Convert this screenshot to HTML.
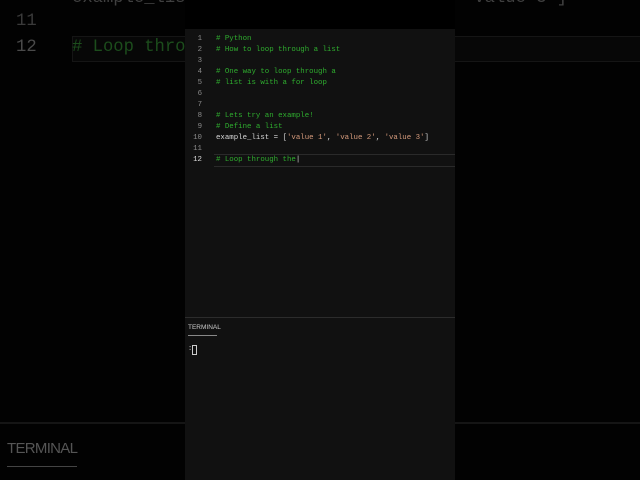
<!DOCTYPE html>
<html><head><style>
body{margin:0;width:640px;height:480px;background:#020202;overflow:hidden;position:relative;font-family:"Liberation Mono",monospace}
.a{position:absolute;white-space:pre}
.big{font-size:17.2px;line-height:26px}
.c{font-size:7.4px;line-height:11px}
.g{color:#2fae2f}
.w{color:#d8d8d8}
.s{color:#d69b7c}
.n{color:#8a8a8a}
</style></head><body>
<div class="a big" style="left:72px;top:-14px;color:#404040">example_list = ['value 1', 'value 2', 'value 3']</div>
<div class="a big" style="left:16px;top:9px;color:#3a3a3a">11</div>
<div class="a big" style="left:16px;top:35px;color:#4a4a4a">12</div>
<div class="a" style="left:72px;top:36px;width:568px;height:24px;border:1px solid #151515;background:#070707"></div>
<div class="a big" style="left:72px;top:35px;color:#1c4d1c">#&nbsp;Loop thro</div>
<div class="a" style="left:0;top:422px;width:640px;height:2px;background:#151515"></div>
<div class="a" style="left:7px;top:440px;font-family:'Liberation Sans',sans-serif;font-size:15px;color:#555;letter-spacing:-0.7px">TERMINAL</div>
<div class="a" style="left:7px;top:466px;width:70px;height:1px;background:#444"></div>
<div class="a" style="left:185px;top:0;width:270px;height:29px;background:#000"></div>
<div class="a" style="left:185px;top:29px;width:270px;height:451px;background:#111"></div>
<div class="a c n" style="left:188px;top:34px;width:14px;text-align:right">1
2
3
4
5
6
7
8
9
10
11
<span style="color:#ddd">12</span></div>
<div class="a" style="left:214px;top:154px;width:241px;height:11px;border-top:1px solid #2a2a2a;border-bottom:1px solid #2a2a2a"></div>
<div class="a c g" style="left:216px;top:34px"># Python
# How to loop through a list

# One way to loop through a
# list is with a for loop


# Lets try an example!
# Define a list
<span class="w">example_list = [</span><span class="s">'value 1'</span><span class="w">, </span><span class="s">'value 2'</span><span class="w">, </span><span class="s">'value 3'</span><span class="w">]</span>

# Loop through the<span class="w">|</span></div>
<div class="a" style="left:185px;top:317px;width:270px;height:1px;background:#2c2c2c"></div>
<div class="a" style="left:188px;top:324px;font-family:'Liberation Sans',sans-serif;font-size:6.5px;color:#ccc">TERMINAL</div>
<div class="a" style="left:188px;top:335px;width:29px;height:1px;background:#888"></div>
<div class="a" style="left:188px;top:345px;font-size:7px;color:#ccc">:</div>
<div class="a" style="left:192px;top:345px;width:3px;height:8px;border:1px solid #ccc"></div>
</body></html>
